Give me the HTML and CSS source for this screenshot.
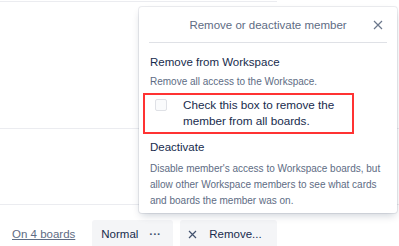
FILE: index.html
```html
<!DOCTYPE html>
<html>
<head>
    <title>Remove member</title>
    <link rel="stylesheet" href="styles.css">
</head>
<body>
    <div class="page">
        <div class="rule-top"></div>
        <div class="member-row tall"></div>
        <div class="member-row short"></div>
        <div class="actions">
            <a class="boards-link" href="#">On 4 boards</a>
            <button class="btn btn-role">Normal <span class="dots">&middot;&middot;&middot;</span></button>
            <button class="btn btn-remove">
                <svg class="x" width="9" height="9" viewBox="0 0 9 9"><path d="M1 1L8 8M8 1L1 8" stroke="#42526e" stroke-width="1.2" fill="none"/></svg>
                Remove...
            </button>
        </div>

        <div class="popover">
            <div class="pop-header">
                <span class="pop-title">Remove or deactivate member</span>
                <svg class="pop-close" width="10" height="10" viewBox="0 0 10 10"><path d="M1 1L9 9M9 1L1 9" stroke="#6b778c" stroke-width="1.2" fill="none"/></svg>
            </div>
            <div class="pop-body">
                <h4 class="section-title first">Remove from Workspace</h4>
                <p class="section-desc tight">Remove all access to the Workspace.</p>
                <label class="check-row">
                    <span class="checkbox"></span>
                    <span class="check-text">Check this box to remove the<br>member from all boards.</span>
                </label>
                <h4 class="section-title">Deactivate</h4>
                <p class="section-desc">Disable member's access to Workspace boards, but allow other Workspace members to see what cards and boards the member was on.</p>
            </div>
        </div>
    </div>
</body>
</html>
```

FILE: styles.css
```css
body { margin: 0; font-family: "Liberation Sans", Arial, sans-serif; font-size: 11.5px; color: #172b4d; background: #fff; }
.page { position: relative; width: 399px; height: 246px; overflow: hidden; }

.rule-top { width: 277px; height: 1px; margin-top: 1px; background: #ebecf0; }
.member-row { border-bottom: 1px solid #ebecf0; }
.member-row.tall { height: 126px; }
.member-row.short { height: 75px; }

.actions { display: flex; align-items: flex-start; padding: 15px 0 0 12px; }
.boards-link { color: #5e6c84; text-decoration: underline; margin-right: 17px; line-height: 28px; }
.btn { font-family: inherit; font-size: 11.5px; color: #172b4d; background: #f4f5f7; border: none; border-radius: 3px; height: 32px; padding: 0 0 4px 9px; margin-right: 7px; display: flex; align-items: center; }
.btn-role { width: 81px; }
.btn-remove { width: 97px; padding-left: 8px; }
.dots { margin-left: 11px; font-weight: bold; color: #42526e; }
.x { margin-right: 12px; }

.popover { position: absolute; left: 139px; top: 7px; width: 258px; height: 206px; background: #fff; border-radius: 3px; box-shadow: 0 4px 8px -2px rgba(9, 30, 66, 0.22), 0 0 0 1px rgba(9, 30, 66, 0.08); box-sizing: border-box; }
.pop-header { position: relative; margin: 0 10px; padding: 8px 0 7px; text-align: center; line-height: 20px; border-bottom: 1px solid #dfe1e6; color: #5e6c84; }
.pop-close { position: absolute; right: 4px; top: 13px; }
.pop-body { padding: 0 11px; }

.section-title { margin: 3px 0 0; font-size: 11.5px; font-weight: normal; line-height: 20px; }
.section-title.first { margin-top: 9px; }
.section-desc { margin: 4px 0 0; font-size: 10px; line-height: 16px; color: #5e6c84; }
.section-desc.tight { margin-top: 2px; }

.check-row { display: flex; align-items: flex-start; margin: 3px 0 0 -7px; width: 197px; border: 2px solid #f33; padding: 2px 0 3px 10px; line-height: 16px; font-size: 11.7px; }
.checkbox { flex: none; width: 12px; height: 12px; margin-top: 2px; margin-right: 16px; border: 1px solid #dfe1e6; border-radius: 2px; background: #fafbfc; box-sizing: border-box; }
```
